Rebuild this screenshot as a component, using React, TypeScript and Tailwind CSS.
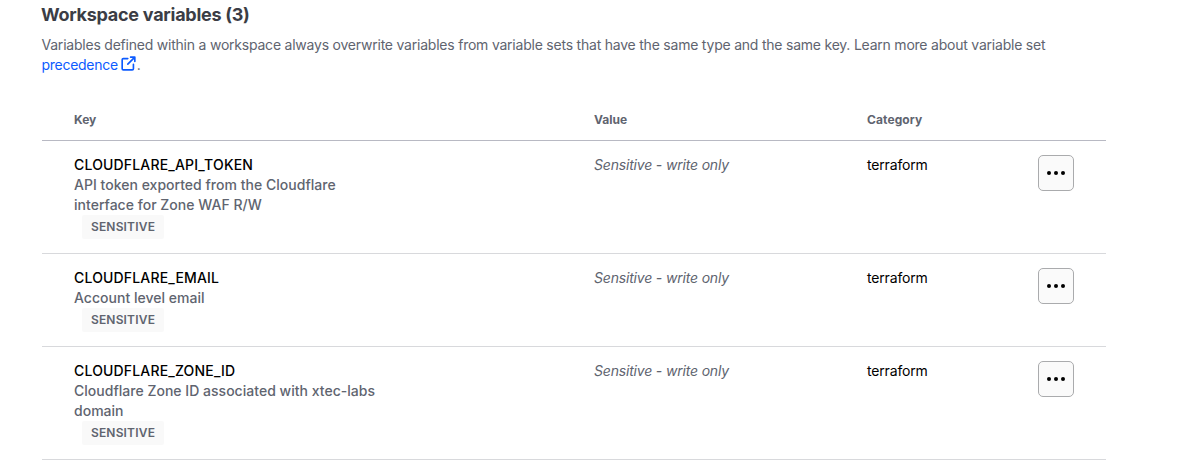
const rows = [
  { key: 'CLOUDFLARE_API_TOKEN', lines: ['API token exported from the Cloudflare', 'interface for Zone WAF R/W'] },
  { key: 'CLOUDFLARE_EMAIL', lines: ['Account level email'] },
  { key: 'CLOUDFLARE_ZONE_ID', lines: ['Cloudflare Zone ID associated with xtec-labs', 'domain'] },
];

function ExternalLink() {
  return (
    <svg className="mr-px ml-[3px] inline-block h-[15px] w-[15px] align-[-1px]" viewBox="0 0 16 16" fill="none" stroke="currentColor" strokeWidth="1.75" strokeLinecap="round" strokeLinejoin="round">
      <path d="M10.25 1.25h4.5v4.5M14.5 1.5 7.25 8.75M7.25 2.75H2.5c-.7 0-1.25.55-1.25 1.25v9.5c0 .7.55 1.25 1.25 1.25H12c.7 0 1.25-.55 1.25-1.25V8.75" />
    </svg>
  );
}

export default function App() {
  return (
    <main className="h-[471px] overflow-hidden bg-white pl-[42px] font-['Inter','Liberation_Sans',sans-serif] text-sm leading-5 text-black">
      <h2 className="-ml-px pt-[3px] text-[18px] leading-6 font-bold tracking-[-0.27px] whitespace-nowrap text-[#3b3d45]">Workspace variables (3)</h2>
      <p className="mt-2 -ml-[0.5px] w-[1064px] tracking-[-0.22px] text-[#60646f]">
        <span className="whitespace-nowrap">Variables defined within a workspace always overwrite variables from variable sets that have the same type and the same key. Learn more about variable set</span>
        <br />
        <a href="#" className="tracking-[-0.28px] text-[#0c5bff]">precedence<ExternalLink /></a>.
      </p>
      <section className="mt-[25px] w-[1064px]">
        <div className="grid h-[41px] grid-cols-[520px_273px_1fr] border-b border-[#b8b9c3] pt-[10px] pl-8 text-xs leading-5 font-bold text-[#60646f]">
          <span>Key</span><span>Value</span><span className="tracking-[0.1px]">Category</span>
        </div>
        {rows.map((row) => (
          <div key={row.key} className="grid grid-cols-[520px_273px_1fr_36px] items-start border-b border-[#d8d9dc] px-8 pt-[14px] pb-[14px]">
            <div className="font-medium whitespace-nowrap">
              <div className="tracking-[0.17px]">{row.key}</div>
              <div className="tracking-[0.02px] text-[#60646f]">{row.lines.map((line) => <div key={line}>{line}</div>)}</div>
              <span className="ml-2 block h-6 w-[82px] rounded-xs bg-[#f9f9f9] text-center text-xs leading-6 font-semibold tracking-[0.18px] text-[#60646f]">SENSITIVE</span>
            </div>
            <span className="tracking-[-0.18px] text-[#60646f] italic">Sensitive - write only</span>
            <span className="tracking-[-0.16px]">terraform</span>
            <button aria-label="More options" className="flex h-9 w-9 items-center justify-center rounded-[5px] border border-[#aaabad] bg-[#fafafa]">
              <svg className="h-4 w-5" viewBox="0 0 20 16" fill="currentColor"><circle cx="3" cy="8" r="2" /><circle cx="10" cy="8" r="2" /><circle cx="17" cy="8" r="2" /></svg>
            </button>
          </div>
        ))}
      </section>
    </main>
  );
}
